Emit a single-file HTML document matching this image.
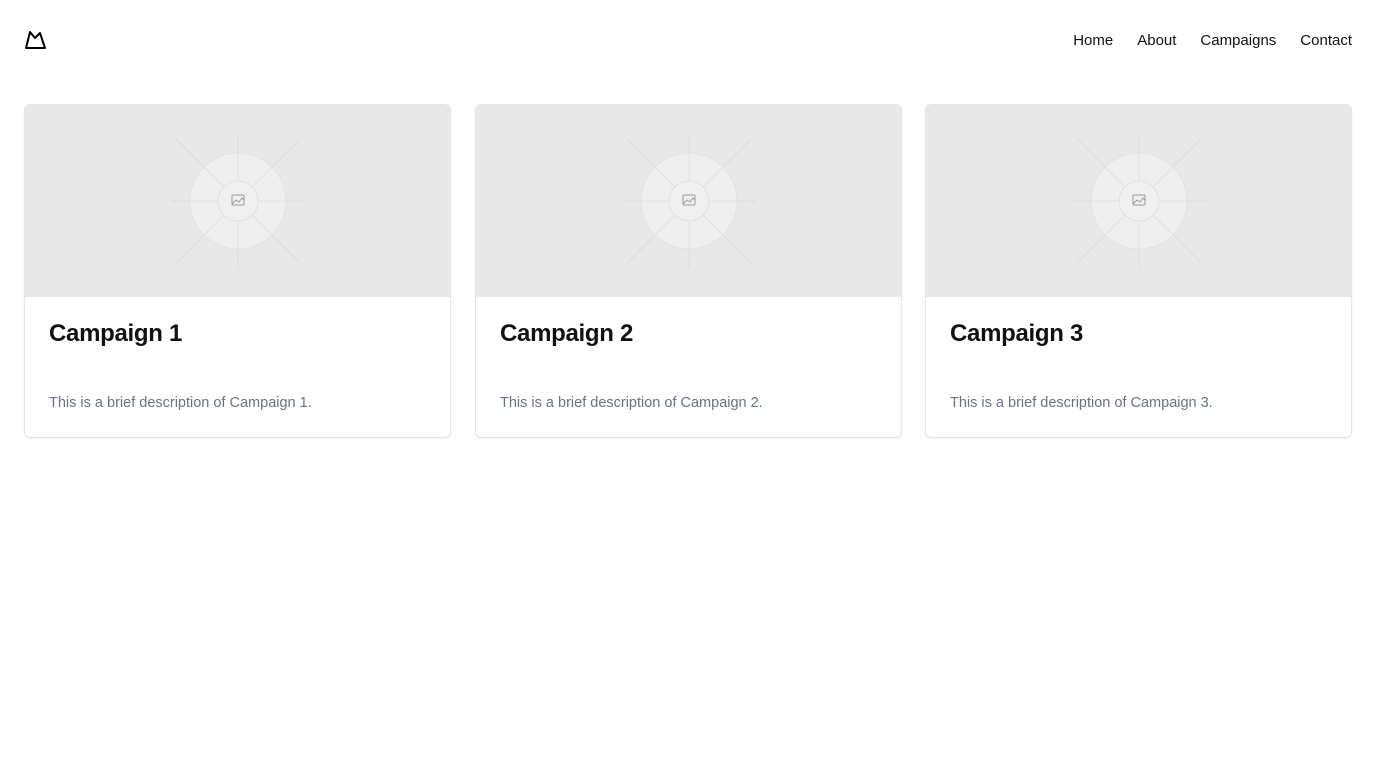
<!DOCTYPE html>
<html><head><meta charset="utf-8"><style>
*{box-sizing:border-box;margin:0;padding:0}
body{width:1376px;height:768px;background:#fff;font-family:"Liberation Sans",sans-serif;position:relative;overflow:hidden}
.logo{position:absolute;left:24px;top:28px}
nav{position:absolute;right:24px;top:32px;display:flex;gap:24px;font-size:15px;color:#111}
.card{position:absolute;top:104px;width:427px;height:334px;border:1px solid #e5e5e5;border-radius:6px;overflow:hidden;box-shadow:0 1px 2px rgba(0,0,0,.05)}
.img{height:192px;background:#e8e8e8;position:relative}
.img svg{position:absolute;left:50%;top:50%;transform:translate(-50%,-50%)}
h2{position:absolute;left:24px;top:215px;font-size:24px;font-weight:bold;color:#111;letter-spacing:-0.3px}
p{position:absolute;left:24px;top:290px;font-size:14.5px;color:#6b7280}
</style></head><body>
<svg class="logo" width="24" height="24" viewBox="0 0 24 24"><path d="M2 20 L6 4 L11 10 L16 5 L21 20 Z" fill="none" stroke="#000" stroke-width="2" stroke-linejoin="round"/></svg>
<nav><span>Home</span><span>About</span><span>Campaigns</span><span>Contact</span></nav>
<div class="card" style="left:24px"><div class="img"><svg width="140" height="140" viewBox="-70 -70 140 140"><g stroke="#dcdcdc" stroke-width="1"><line x1="0" y1="-67" x2="0" y2="67"/><line x1="-67" y1="0" x2="67" y2="0"/><line x1="-62" y1="-62" x2="62" y2="62"/><line x1="-62" y1="62" x2="62" y2="-62"/></g><circle r="48" fill="#efefef" stroke="#e2e2e2"/><g stroke="#e0e0e0"><line x1="0" y1="-48" x2="0" y2="48"/><line x1="-48" y1="0" x2="48" y2="0"/><line x1="-34" y1="-34" x2="34" y2="34"/><line x1="-34" y1="34" x2="34" y2="-34"/></g><circle r="20" fill="#f0f0f0" stroke="#e0e0e0"/><rect x="-6" y="-6" width="12" height="10" fill="none" stroke="#999" rx="1"/><path d="M-6 3 L-2 -1 L1 1 L4 -3 L6 -1" fill="none" stroke="#999"/></svg></div><h2>Campaign 1</h2><p>This is a brief description of Campaign 1.</p></div>
<div class="card" style="left:475px"><div class="img"><svg width="140" height="140" viewBox="-70 -70 140 140"><g stroke="#dcdcdc" stroke-width="1"><line x1="0" y1="-67" x2="0" y2="67"/><line x1="-67" y1="0" x2="67" y2="0"/><line x1="-62" y1="-62" x2="62" y2="62"/><line x1="-62" y1="62" x2="62" y2="-62"/></g><circle r="48" fill="#efefef" stroke="#e2e2e2"/><g stroke="#e0e0e0"><line x1="0" y1="-48" x2="0" y2="48"/><line x1="-48" y1="0" x2="48" y2="0"/><line x1="-34" y1="-34" x2="34" y2="34"/><line x1="-34" y1="34" x2="34" y2="-34"/></g><circle r="20" fill="#f0f0f0" stroke="#e0e0e0"/><rect x="-6" y="-6" width="12" height="10" fill="none" stroke="#999" rx="1"/><path d="M-6 3 L-2 -1 L1 1 L4 -3 L6 -1" fill="none" stroke="#999"/></svg></div><h2>Campaign 2</h2><p>This is a brief description of Campaign 2.</p></div>
<div class="card" style="left:925px"><div class="img"><svg width="140" height="140" viewBox="-70 -70 140 140"><g stroke="#dcdcdc" stroke-width="1"><line x1="0" y1="-67" x2="0" y2="67"/><line x1="-67" y1="0" x2="67" y2="0"/><line x1="-62" y1="-62" x2="62" y2="62"/><line x1="-62" y1="62" x2="62" y2="-62"/></g><circle r="48" fill="#efefef" stroke="#e2e2e2"/><g stroke="#e0e0e0"><line x1="0" y1="-48" x2="0" y2="48"/><line x1="-48" y1="0" x2="48" y2="0"/><line x1="-34" y1="-34" x2="34" y2="34"/><line x1="-34" y1="34" x2="34" y2="-34"/></g><circle r="20" fill="#f0f0f0" stroke="#e0e0e0"/><rect x="-6" y="-6" width="12" height="10" fill="none" stroke="#999" rx="1"/><path d="M-6 3 L-2 -1 L1 1 L4 -3 L6 -1" fill="none" stroke="#999"/></svg></div><h2>Campaign 3</h2><p>This is a brief description of Campaign 3.</p></div>
</body></html>
